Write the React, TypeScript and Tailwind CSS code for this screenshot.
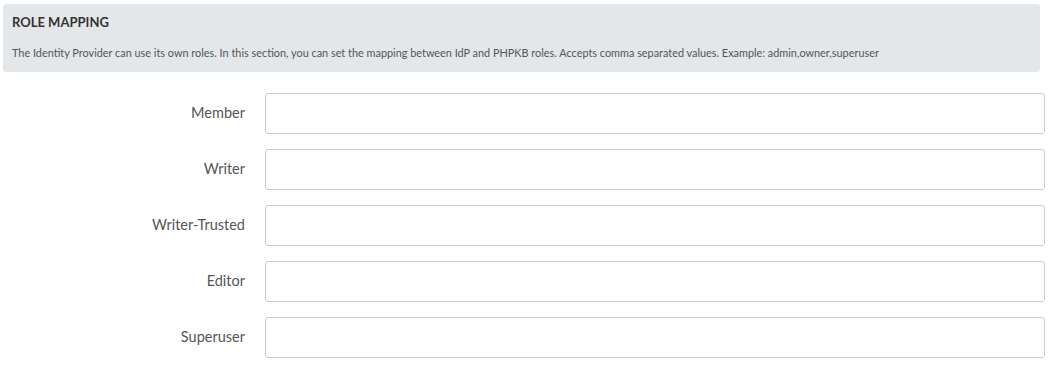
const roles = ["Member", "Writer", "Writer-Trusted", "Editor", "Superuser"];

export default function App() {
  return (
    <div className="w-[1052px] h-[366px] bg-white font-['Lato','Liberation_Sans',sans-serif] pt-[4px]">
      {/* Section header */}
      <div className="ml-[3px] w-[1037px] h-[68px] rounded-[3px] bg-[#e4e7ea] px-[9px] pt-[10px]">
        <h3 className="text-[13px] leading-[16px] font-bold text-[#333]">ROLE MAPPING</h3>
        <p className="mt-[16px] text-[10.88px] leading-[14px] text-[#555]">
          The Identity Provider can use its own roles. In this section, you can set the mapping between IdP and PHPKB roles. Accepts comma separated values. Example: admin,owner,superuser
        </p>
      </div>

      {/* Role fields */}
      <div className="mt-[21px] flex flex-col gap-[15px]">
        {roles.map((role) => (
          <div key={role} className="flex items-center">
            <label className="w-[265px] pr-[20px] pb-[2px] text-right text-[14.5px] text-[#555]">{role}</label>
            <input
              type="text"
              className="w-[780px] h-[41px] rounded-[3px] border border-[#ccc] bg-white px-3 text-[14px] outline-none"
            />
          </div>
        ))}
      </div>
    </div>
  );
}
